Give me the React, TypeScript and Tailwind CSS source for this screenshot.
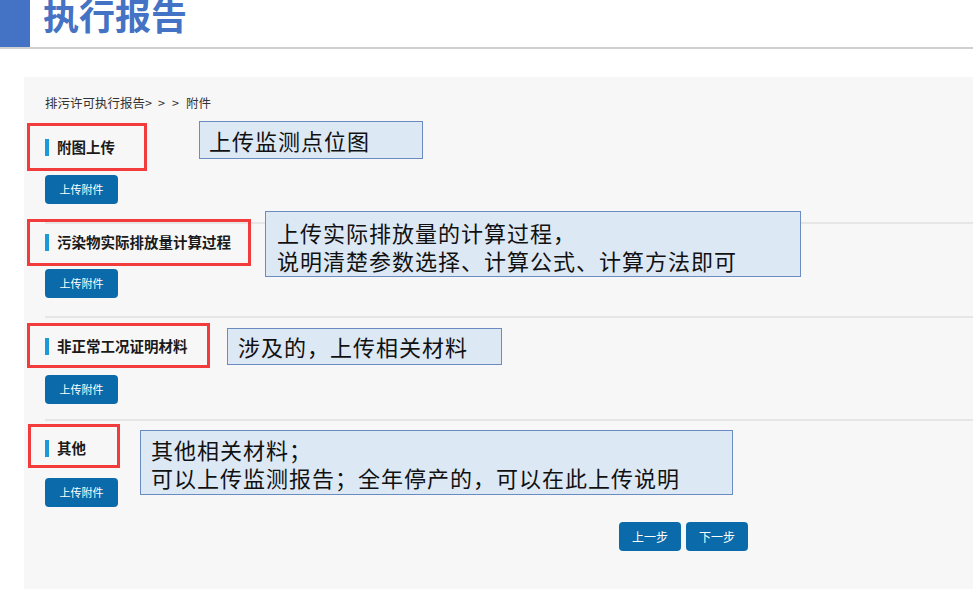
import React from "react";

const FONT = { fontFamily: '"Noto Sans CJK SC", "Noto Sans", sans-serif' };

function Callout({ className, lines }: { className: string; lines: string[] }) {
  return (
    <div
      className={`absolute border border-[#6a8cc0] bg-[#dde8f5] text-[22px] leading-[28px] tracking-[1px] text-[#111] whitespace-nowrap ${className}`}
    >
      {lines.map((l, i) => (
        <div key={i}>{l}</div>
      ))}
    </div>
  );
}

function Section({
  title,
  redBox,
  callout,
  mt,
  btnMt,
}: {
  title: string;
  redBox: string;
  callout: React.ReactNode;
  mt: string;
  btnMt: string;
}) {
  return (
    <div className={mt}>
      <div className="relative flex h-[20px] items-center">
        <div className="h-[17px] w-[4px] bg-[#1a9ad6]" />
        <div className="ml-[8px] text-[14.5px] font-bold text-[#1a1a1a]">{title}</div>
        <div className={`absolute border-[3px] border-[#f23b3b] ${redBox}`} />
        {callout}
      </div>
      <div className={btnMt}>
        <button className="flex h-[29px] w-[73px] items-center justify-center rounded-[4px] bg-[#0b6aa9] text-[11px] text-white">
          上传附件
        </button>
      </div>
    </div>
  );
}

export default function App() {
  return (
    <div className="h-[589px] w-[973px] overflow-hidden bg-white" style={FONT}>
      <div className="flex h-[49px] border-b-2 border-[#d0d0d0]">
        <div className="h-full w-[30px] bg-[#4472c4]" />
        <div className="ml-[13px] -mt-[9px] text-[36px] font-bold leading-[46px] text-[#4472c4]">
          执行报告
        </div>
      </div>
      <div className="ml-[24px] mt-[28px] h-[520px] bg-[#f7f7f7] pl-[21px] pt-[18px]">
        <div className="flex text-[12.5px] leading-[16px] text-[#333]">
          <span>排污许可执行报告</span>
          <span className="mr-[6px]">&gt;</span>
          <span className="mr-[7px]">&gt;</span>
          <span className="mr-[7px]">&gt;</span>
          <span>附件</span>
        </div>

        <Section
          title="附图上传"
          mt="mt-[26px]"
          btnMt="mt-[18px]"
          redBox="-left-[18px] -top-[14px] h-[48px] w-[120px]"
          callout={<Callout className="left-[154px] -top-[16px] h-[38px] w-[224px] pl-[9px] pt-[4px]" lines={["上传监测点位图"]} />}
        />
        <div className="mt-[18px] h-[2px] bg-[#e6e6e6]" />

        <Section
          title="污染物实际排放量计算过程"
          mt="mt-[8px]"
          btnMt="mt-[17px]"
          redBox="-left-[18px] -top-[13px] h-[47px] w-[224px]"
          callout={
            <Callout
              className="left-[220px] -top-[21px] h-[66px] w-[536px] pl-[11px] pt-[6px]"
              lines={["上传实际排放量的计算过程，", "说明清楚参数选择、计算公式、计算方法即可"]}
            />
          }
        />
        <div className="mt-[18px] h-[2px] bg-[#e6e6e6]" />

        <Section
          title="非正常工况证明材料"
          mt="mt-[18px]"
          btnMt="mt-[19px]"
          redBox="-left-[18px] -top-[13px] h-[45px] w-[183px]"
          callout={<Callout className="left-[182px] -top-[8px] h-[37px] w-[275px] pl-[10px] pt-[3px]" lines={["涉及的，上传相关材料"]} />}
        />
        <div className="mt-[15px] h-[2px] bg-[#e6e6e6]" />

        <Section
          title="其他"
          mt="mt-[17px]"
          btnMt="mt-[20px]"
          redBox="-left-[17px] -top-[14px] h-[44px] w-[92px]"
          callout={
            <Callout
              className="left-[95px] -top-[8px] h-[65px] w-[593px] pl-[10px] pt-[4px]"
              lines={["其他相关材料；", "可以上传监测报告；全年停产的，可以在此上传说明"]}
            />
          }
        />

        <div className="ml-[574px] mt-[15px] flex gap-[5px]">
          <button className="flex h-[29px] w-[62px] items-center justify-center rounded-[4px] bg-[#0b6aa9] text-[12px] text-white">
            上一步
          </button>
          <button className="flex h-[29px] w-[62px] items-center justify-center rounded-[4px] bg-[#0b6aa9] text-[12px] text-white">
            下一步
          </button>
        </div>
      </div>
    </div>
  );
}
